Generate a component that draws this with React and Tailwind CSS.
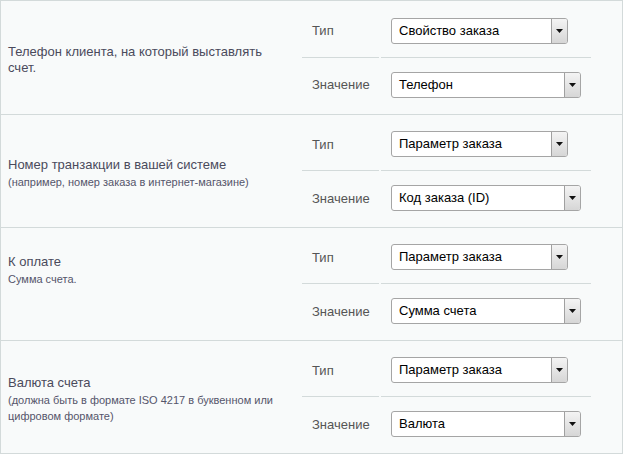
import React from 'react';

const rows = [
    { title: 'Телефон клиента, на который выставлять счет.', note: null, type: 'Свойство заказа', value: 'Телефон', pad: 'pb-0' },
    { title: 'Номер транзакции в вашей системе', note: '(например, номер заказа в интернет-магазине)', type: 'Параметр заказа', value: 'Код заказа (ID)', pad: 'pb-0' },
    { title: 'К оплате', note: 'Сумма счета.', type: 'Параметр заказа', value: 'Сумма счета', pad: 'pb-[33px]' },
    { title: 'Валюта счета', note: '(должна быть в формате ISO 4217 в буквенном или цифровом формате)', type: 'Параметр заказа', value: 'Валюта', pad: 'pb-0' },
];

function Select({ text, width }) {
    return (
        <div className={`${width} h-[26px] flex items-stretch bg-white border border-[#a5a5a5] rounded-[3px] overflow-hidden`}>
            <span className="flex-1 flex items-center pl-[7px] text-[13px] text-black">{text}</span>
            <span className="w-[16px] flex items-center justify-center border-l border-[#a0a0a0] bg-gradient-to-b from-[#f4f4f4] to-[#d6d6d6]">
                <svg width="7" height="4" viewBox="0 0 7 4"><path d="M0 0h7L3.5 4z" fill="#111" /></svg>
            </span>
        </div>
    );
}

export default function App() {
    return (
        <div className="w-[623px] bg-[#f8fafa] border border-[#d3dada] text-[13px]" style={{ fontFamily: '"Liberation Sans", Arial, sans-serif' }}>
            {rows.map((r, i) => (
                <div key={i} className={`flex h-[113px] ${i > 0 ? 'border-t border-[#d3dada]' : ''}`}>
                    <div className={`w-[301px] pl-[7px] pr-[10px] pt-[4px] ${r.pad} flex flex-col justify-center`}>
                        <div className={`text-[13px] ${r.note ? 'leading-[18px]' : 'leading-[16px]'} text-[#4a4a5c]`}>{r.title}</div>
                        {r.note && <div className="text-[11px] leading-[16px] text-[#55556a] pr-[2px]">{r.note}</div>}
                    </div>
                    <div className="w-[289px] flex flex-col justify-center">
                        <div className="flex gap-[2px]">
                            <div className="w-[77px] h-[55px] border-b border-[#d3dada] pl-[10px] pt-[3px] flex items-center text-[#555]">Тип</div>
                            <div className="flex-1 h-[55px] border-b border-[#d3dada] pl-[10px] pt-[15px]">
                                <Select text={r.type} width="w-[177px]" />
                            </div>
                        </div>
                        <div className="flex gap-[2px]">
                            <div className="w-[77px] h-[55px] pl-[10px] flex items-center text-[#555]">Значение</div>
                            <div className="flex-1 h-[55px] pl-[10px] pt-[14px]">
                                <Select text={r.value} width="w-[190px]" />
                            </div>
                        </div>
                    </div>
                </div>
            ))}
        </div>
    );
}
